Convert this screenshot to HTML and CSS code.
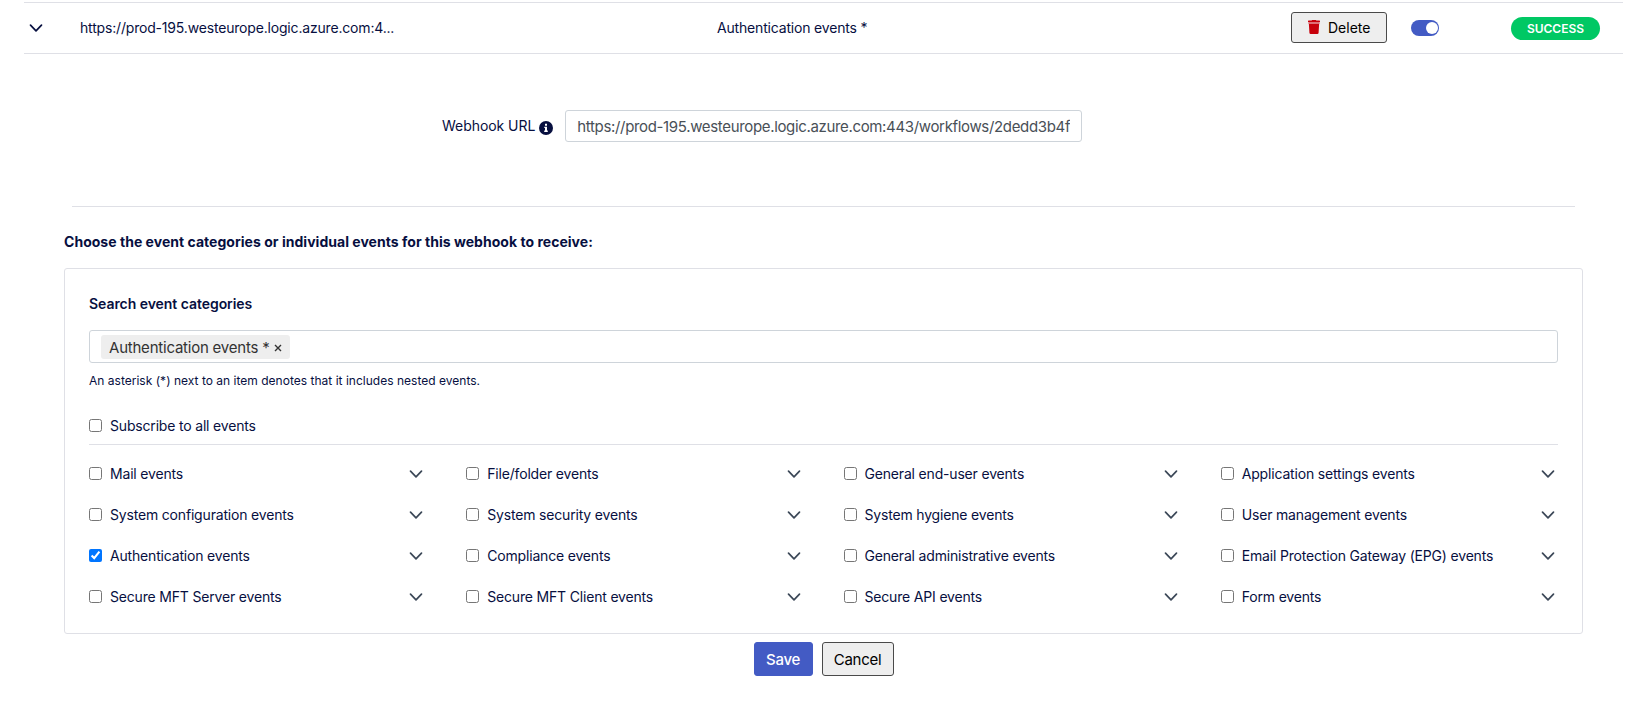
FILE: index.html
```html
<!DOCTYPE html>
<html lang="en">
<head>
  <meta charset="UTF-8">
  <title>Webhooks</title>
  <meta name="viewport" content="width=device-width, initial-scale=1.0">
  <link rel="stylesheet" href="styles.css">
</head>
<body>
  <!-- Shared icons -->
  <svg class="sprite" width="0" height="0">
    <symbol id="chevron" viewBox="0 0 14 14">
      <path d="M1.5 4.2 L7 9.8 L12.5 4.2" fill="none" stroke="currentColor" stroke-width="1.7" stroke-linecap="round" stroke-linejoin="round"/>
    </symbol>
  </svg>

  <div class="webhook-row">
    <svg class="chevron row-chevron"><use href="#chevron"/></svg>
    <span class="row-url">https://prod-195.westeurope.logic.azure.com:4...</span>
    <span class="row-events">Authentication events *</span>
    <button type="button" class="btn btn-delete">
      <svg class="trash" viewBox="0 0 12 14">
        <path d="M0 1.2 Q0 .6 .6 .6 H3.6 L4.2 0 H7.8 L8.4 .6 H11.4 Q12 .6 12 1.2 V2 H0 Z" fill="#c7000b"/>
        <path d="M.4 2 H11.6 V4 H.4 Z" fill="#de6f76"/>
        <path d="M.9 4 H11.1 L10.6 12.8 Q10.5 14 9.4 14 H2.6 Q1.5 14 1.4 12.8 Z" fill="#c7000b"/>
      </svg>
      Delete
    </button>
    <span class="toggle"></span>
    <span class="badge">SUCCESS</span>
  </div>

  <form class="details">
    <div class="url-group">
      <label for="webhookUrl">Webhook URL</label>
      <svg class="info" viewBox="0 0 14 14">
        <circle cx="7" cy="7" r="7" fill="#070f3f"/>
        <path d="M6 2.8 H8 V4.7 H6 Z M5.3 5.8 H8 V9.6 H8.8 V10.9 H5.2 V9.6 H6 V7.1 H5.3 Z" fill="#fff"/>
      </svg>
      <input type="text" id="webhookUrl" value="https://prod-195.westeurope.logic.azure.com:443/workflows/2dedd3b4f7">
    </div>

    <h2>Choose the event categories or individual events for this webhook to receive:</h2>

    <div class="panel">
      <h3>Search event categories</h3>
      <div class="search-box">
        <span class="tag">Authentication events *
          <svg class="tag-remove" viewBox="0 0 8 8"><path d="M1 1 L7 7 M7 1 L1 7" stroke="#333" stroke-width="1.4"/></svg>
        </span>
      </div>
      <p class="hint">An asterisk (*) next to an item denotes that it includes nested events.</p>

      <label class="check subscribe"><input type="checkbox">Subscribe to all events</label>

      <div class="events">
        <div class="event"><label class="check"><input type="checkbox">Mail events</label><svg class="chevron"><use href="#chevron"/></svg></div>
        <div class="event"><label class="check"><input type="checkbox">File/folder events</label><svg class="chevron"><use href="#chevron"/></svg></div>
        <div class="event"><label class="check"><input type="checkbox">General end-user events</label><svg class="chevron"><use href="#chevron"/></svg></div>
        <div class="event"><label class="check"><input type="checkbox">Application settings events</label><svg class="chevron"><use href="#chevron"/></svg></div>

        <div class="event"><label class="check"><input type="checkbox">System configuration events</label><svg class="chevron"><use href="#chevron"/></svg></div>
        <div class="event"><label class="check"><input type="checkbox">System security events</label><svg class="chevron"><use href="#chevron"/></svg></div>
        <div class="event"><label class="check"><input type="checkbox">System hygiene events</label><svg class="chevron"><use href="#chevron"/></svg></div>
        <div class="event"><label class="check"><input type="checkbox">User management events</label><svg class="chevron"><use href="#chevron"/></svg></div>

        <div class="event"><label class="check"><input type="checkbox" checked>Authentication events</label><svg class="chevron"><use href="#chevron"/></svg></div>
        <div class="event"><label class="check"><input type="checkbox">Compliance events</label><svg class="chevron"><use href="#chevron"/></svg></div>
        <div class="event"><label class="check"><input type="checkbox">General administrative events</label><svg class="chevron"><use href="#chevron"/></svg></div>
        <div class="event"><label class="check"><input type="checkbox">Email Protection Gateway (EPG) events</label><svg class="chevron"><use href="#chevron"/></svg></div>

        <div class="event"><label class="check"><input type="checkbox">Secure MFT Server events</label><svg class="chevron"><use href="#chevron"/></svg></div>
        <div class="event"><label class="check"><input type="checkbox">Secure MFT Client events</label><svg class="chevron"><use href="#chevron"/></svg></div>
        <div class="event"><label class="check"><input type="checkbox">Secure API events</label><svg class="chevron"><use href="#chevron"/></svg></div>
        <div class="event"><label class="check"><input type="checkbox">Form events</label><svg class="chevron"><use href="#chevron"/></svg></div>
      </div>
    </div>

    <div class="actions">
      <button type="button" class="btn btn-save">Save</button>
      <button type="button" class="btn btn-cancel">Cancel</button>
    </div>
  </form>
</body>
</html>
```
FILE: styles.css
```css
:root {
  --text-color: #070f3f;
  --border-color: #dfe0e6;
  --primary: #435bc4;
  --success: #00c864;
}

* {
  margin: 0;
  padding: 0;
  box-sizing: border-box;
}

body {
  background-color: #fff;
  color: var(--text-color);
  font-family: Inter, "Liberation Sans", sans-serif;
  font-size: 14px;
  line-height: 20px;
  letter-spacing: -0.18px;
  padding: 2px 22px 0 24px;
  overflow: hidden;
}

.sprite {
  display: block;
}

.chevron {
  width: 14px;
  height: 14px;
  flex: none;
  color: #3b4757;
}

/* Summary row */
.webhook-row {
  display: grid;
  grid-template-columns: 56px 637px 574px 120px 100px auto;
  align-items: center;
  height: 52px;
  border-top: 1px solid var(--border-color);
  border-bottom: 1px solid var(--border-color);
}

.row-chevron {
  margin-left: 5px;
  color: var(--text-color);
}

.btn {
  border: 1px solid #4a4a4a;
  border-radius: 3px;
  background-color: #eee;
  color: #000;
  font-family: inherit;
  font-size: 14px;
}

.btn-delete {
  display: flex;
  align-items: center;
  width: 96px;
  height: 31px;
  margin-bottom: 2px;
  padding-left: 16px;
  gap: 8px;
}

.trash {
  width: 12px;
  height: 14px;
}

.toggle {
  display: flex;
  justify-content: flex-end;
  width: 28px;
  height: 16px;
  padding: 2px 1px;
  border-radius: 8px;
  background-color: var(--primary);
}

.toggle::after {
  content: "";
  width: 12px;
  height: 12px;
  border-radius: 50%;
  background-color: #fff;
}

.badge {
  width: 89px;
  height: 23px;
  border-radius: 12px;
  background-color: var(--success);
  color: #fff;
  font-size: 12px;
  font-weight: 600;
  line-height: 23px;
  letter-spacing: 0;
  text-align: center;
}

/* Expanded details */
.details {
  padding: 56px 40px 0;
}

.url-group {
  display: flex;
  align-items: center;
  height: 97px;
  padding: 0 0 65px 370px;
  margin: 0 8px;
  border-bottom: 1px solid var(--border-color);
}

.url-group label {
  letter-spacing: -0.05px;
}

.info {
  width: 14px;
  height: 14px;
  margin: 4px 12px 0 4px;
}

.url-group input {
  width: 517px;
  height: 32px;
  padding: 1px 11px 0;
  border: 1px solid #ced4da;
  border-radius: 3px;
  color: #495057;
  font-family: inherit;
  font-size: 15px;
  letter-spacing: -0.34px;
}

h2,
h3 {
  font-size: 14px;
  font-weight: 600;
}

h2 {
  margin: 25px 0 16px;
  font-weight: 700;
  letter-spacing: 0.03px;
}

h3 {
  letter-spacing: -0.05px;
}

.panel {
  height: 366px;
  padding: 25px 24px 0;
  border: 1px solid var(--border-color);
  border-radius: 3px;
}

.search-box {
  display: flex;
  align-items: center;
  height: 33px;
  margin-top: 16px;
  padding-left: 11px;
  border: 1px solid #ced4da;
  border-radius: 3px;
}

.tag {
  display: flex;
  align-items: center;
  gap: 5px;
  height: 24px;
  margin-top: 1px;
  padding: 1px 8px 0;
  border-radius: 3px;
  background-color: #eee;
  color: #333;
  font-size: 15px;
  letter-spacing: -0.22px;
}

.tag-remove {
  width: 8px;
  height: 8px;
}

.hint {
  margin-top: 8px;
  font-size: 12px;
  letter-spacing: 0.015px;
}

.check {
  display: flex;
  align-items: center;
}

.check input {
  width: 13px;
  height: 13px;
  margin: 0 8px 2px 0;
}

.subscribe {
  height: 29px;
  margin-top: 25px;
  padding-bottom: 8px;
  border-bottom: 1px solid var(--border-color);
}

.events {
  display: grid;
  grid-template-columns: repeat(4, 1fr);
  column-gap: 40px;
  row-gap: 21px;
  margin-top: 19px;
}

.event {
  display: flex;
  align-items: center;
  justify-content: space-between;
  height: 20px;
  padding-right: 3px;
}

.actions {
  display: flex;
  justify-content: center;
  gap: 9px;
  margin-top: 8px;
}

.btn-save,
.btn-cancel {
  height: 34px;
  padding-top: 1px;
  font-size: 15px;
  letter-spacing: -0.27px;
}

.btn-save {
  width: 59px;
  border-color: var(--primary);
  background-color: var(--primary);
  color: #fff;
  font-weight: 500;
}

.btn-cancel {
  width: 72px;
}
```
